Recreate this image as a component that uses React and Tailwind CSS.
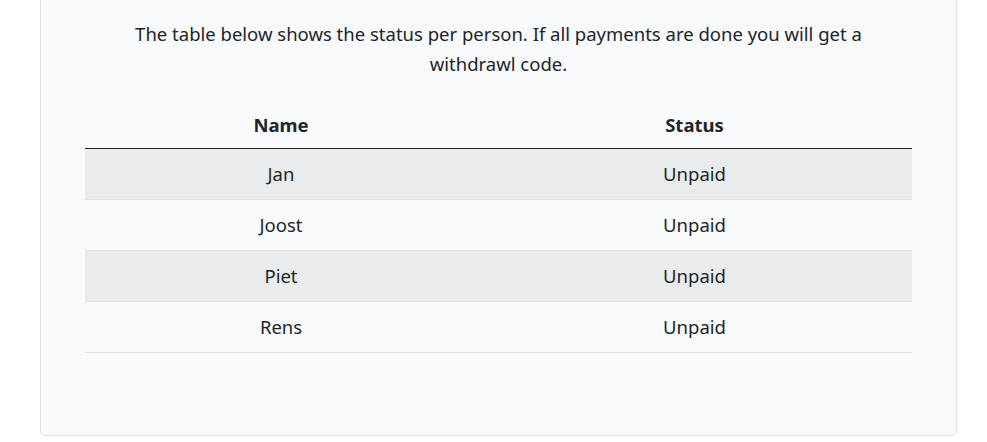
import React from 'react';

const people = [
  { name: 'Jan', status: 'Unpaid' },
  { name: 'Joost', status: 'Unpaid' },
  { name: 'Piet', status: 'Unpaid' },
  { name: 'Rens', status: 'Unpaid' },
];

const App = () => {
  return (
    <div className="w-[987px] h-[442px] overflow-hidden bg-white text-[#212529] font-['Noto_Sans',sans-serif]">
      <div className="ml-[40px] w-[917px] -mt-[10px] h-[446px] bg-[#f8f9fa] border border-[#dfe0e1] rounded-b-[5px] pl-[44px] pr-[44px] pt-[28px]">
        <p className="text-center text-[18.5px] leading-[30px] px-[36px]">
          The table below shows the status per person. If all payments are done you will get a withdrawl code.
        </p>

        <table className="w-full mt-[24px] text-center text-[18.5px] border-collapse">
          <thead>
            <tr className="border-b border-[#212529]">
              <th className="w-[392px] h-[45px] font-bold">Name</th>
              <th className="h-[45px] font-bold">Status</th>
            </tr>
          </thead>
          <tbody>
            {people.map((p, i) => (
              <tr
                key={p.name}
                className={(i % 2 === 0 ? 'bg-[#eaebed] ' : '') + 'border-b border-[#dee2e6]'}
              >
                <td className="h-[51px]">{p.name}</td>
                <td className="h-[51px]">{p.status}</td>
              </tr>
            ))}
          </tbody>
        </table>
      </div>
    </div>
  );
};

export default App;
